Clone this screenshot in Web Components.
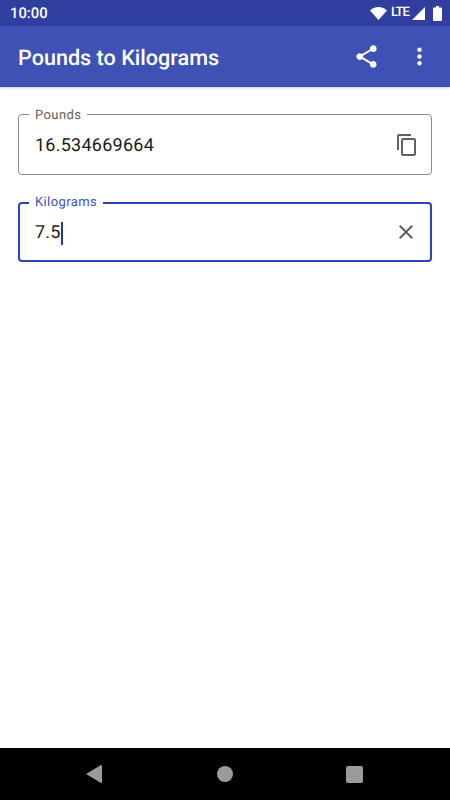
<!DOCTYPE html>
<html>
<head>
<meta charset="utf-8">
<style>
  html, body { margin: 0; height: 100%; background: #fff; }
  body { font-family: Roboto, sans-serif; text-rendering: geometricPrecision; }
  #screen { height: 800px; display: flex; flex-direction: column; overflow: hidden; }
</style>
</head>
<body>
<div id="screen">
  <status-bar></status-bar>
  <app-bar title="Pounds to Kilograms"></app-bar>
  <converter-form>
    <outlined-field label="Pounds" value="16.534669664" icon="copy"></outlined-field>
    <outlined-field label="Kilograms" value="7.5" icon="clear" focused></outlined-field>
  </converter-form>
  <nav-bar></nav-bar>
</div>

<script>
class StatusBar extends HTMLElement {
  connectedCallback() {
    this.attachShadow({ mode: 'open' });
    this.shadowRoot.innerHTML = `
      <style>
        :host {
          display: flex;
          align-items: center;
          justify-content: space-between;
          height: 26px;
          flex: none;
          background: #303f9f;
          color: #fff;
          padding: 0 8px 0 10px;
          font: 500 14.8px/26px Roboto, sans-serif;
        }
        .icons { display: flex; align-items: center; }
        .lte { font-size: 13px; letter-spacing: -0.9px; margin: 0 3px 0 4px; }
        svg { display: block; fill: #fff; }
      </style>
      <span>10:00</span>
      <div class="icons">
        <svg width="17" height="13" viewBox="0 0 17 13"><path d="M0 3.6C2.2 1.4 5.2 0 8.5 0s6.300 1.400 8.500 3.600L8.500 13z"/></svg>
        <span class="lte">LTE</span>
        <svg width="13" height="13" viewBox="0 0 13 13"><path d="M13 0v13H0z"/></svg>
        <svg width="9" height="15" viewBox="0 0 9 15" style="margin-left:8px"><path d="M3 0h3v1.500h2a1 1 0 0 1 1 1V14a1 1 0 0 1-1 1H1a1 1 0 0 1-1-1V2.500a1 1 0 0 1 1-1h2z"/></svg>
      </div>
    `;
  }
}

class AppBar extends HTMLElement {
  connectedCallback() {
    this.attachShadow({ mode: 'open' });
    this.shadowRoot.innerHTML = `
      <style>
        :host {
          display: flex;
          align-items: center;
          height: 61px;
          flex: none;
          background: #3f51b5;
          color: #fff;
          padding-left: 18px;
          box-shadow: 0 1px 2px rgba(0, 0, 0, 0.2);
          position: relative;
        }
        .title { flex: 1; padding-top: 3px; font: 500 21.6px Roboto, sans-serif; }
        .action { width: 27px; height: 27px; display: block; fill: #fff; }
        .share { margin-right: 26px; }
        .more { margin-right: 17px; }
      </style>
      <span class="title"></span>
      <svg class="action share" viewBox="0 0 24 24"><path d="M18 16.080c-.76 0-1.440.3-1.960.77L8.910 12.700c.05-.23.09-.46.09-.7s-.04-.47-.09-.7l7.050-4.110c.54.5 1.250.81 2.040.81 1.660 0 3-1.340 3-3s-1.340-3-3-3-3 1.340-3 3c0 .24.04.47.09.7L8.040 9.810C7.500 9.310 6.790 9 6 9c-1.660 0-3 1.340-3 3s1.340 3 3 3c.79 0 1.500-.31 2.040-.81l7.120 4.160c-.05.21-.08.43-.08.65 0 1.610 1.310 2.920 2.920 2.920s2.920-1.310 2.920-2.920-1.310-2.920-2.920-2.920z"/></svg>
      <svg class="action more" viewBox="0 0 24 24"><path d="M12 8c1.100 0 2-.9 2-2s-.9-2-2-2-2 .9-2 2 .9 2 2 2zm0 2c-1.100 0-2 .9-2 2s.9 2 2 2 2-.9 2-2-.9-2-2-2zm0 6c-1.100 0-2 .9-2 2s.9 2 2 2 2-.9 2-2-.9-2-2-2z"/></svg>
    `;
    this.shadowRoot.querySelector('.title').textContent = this.getAttribute('title');
  }
}

class ConverterForm extends HTMLElement {
  connectedCallback() {
    this.attachShadow({ mode: 'open' });
    this.shadowRoot.innerHTML = `
      <style>
        :host {
          display: flex;
          flex-direction: column;
          flex: 1;
          gap: 27px;
          padding: 27px 18px 0;
          background: #fff;
        }
      </style>
      <slot></slot>
    `;
  }
}

const FIELD_ICONS = {
  copy: '<path d="M16 1H4c-1.100 0-2 .9-2 2v14h2V3h12V1zm3 4H8c-1.100 0-2 .9-2 2v14c0 1.100.9 2 2 2h11c1.100 0 2-.9 2-2V7c0-1.100-.9-2-2-2zm0 16H8V7h11v14z"/>',
  clear: '<path d="M19 6.410L17.590 5 12 10.590 6.410 5 5 6.410 10.590 12 5 17.590 6.410 19 12 13.410 17.590 19 19 17.590 13.410 12z"/>'
};

class OutlinedField extends HTMLElement {
  connectedCallback() {
    this.attachShadow({ mode: 'open' });
    this.shadowRoot.innerHTML = `
      <style>
        :host {
          display: flex;
          align-items: center;
          height: 61px;
          box-sizing: border-box;
          position: relative;
          border: 1px solid #8c8c8c;
          border-radius: 4px;
          padding: 0 12px 0 16px;
          color: #1a1a1a;
        }
        :host([focused]) {
          height: 60px;
          border: 2px solid #2a47b6;
          padding: 0 12px 0 15px;
        }
        .label {
          position: absolute;
          left: 10px;
          top: -7px;
          padding: 0 6px;
          background: #fff;
          font: 400 13px/16px Roboto, sans-serif;
          letter-spacing: 0.4px;
          color: #616161;
        }
        :host([focused]) .label { left: 9px; top: -9px; color: #3f51b5; }
        .value {
          flex: 1;
          padding-top: 2px;
          font: 400 18px/24px Roboto, sans-serif;
          letter-spacing: 0.25px;
          display: flex;
          align-items: center;
        }
        .caret { display: none; width: 2px; height: 23px; background: #1f3aa8; }
        :host([focused]) .caret { display: block; }
        svg { width: 24px; height: 24px; fill: #616161; display: block; }
      </style>
      <span class="label"></span>
      <div class="value"><span class="text"></span><span class="caret"></span></div>
      <svg viewBox="0 0 24 24">${FIELD_ICONS[this.getAttribute('icon')]}</svg>
    `;
    this.shadowRoot.querySelector('.label').textContent = this.getAttribute('label');
    this.shadowRoot.querySelector('.text').textContent = this.getAttribute('value');
  }
}

class NavBar extends HTMLElement {
  connectedCallback() {
    this.attachShadow({ mode: 'open' });
    this.shadowRoot.innerHTML = `
      <style>
        :host {
          display: flex;
          align-items: center;
          height: 52px;
          flex: none;
          box-sizing: border-box;
          padding-left: 86px;
          background: #000;
        }
        svg { display: block; fill: #9b9b9b; }
        .back { margin-right: 115px; }
        .home { margin-right: 113px; }
      </style>
      <svg class="back" width="16" height="18" viewBox="0 0 16 18"><path d="M15 0a1 1 0 0 1 1 1v16a1 1 0 0 1-1 1L0 9z"/></svg>
      <svg class="home" width="16" height="16" viewBox="0 0 16 16"><circle cx="8" cy="8" r="8"/></svg>
      <svg width="17" height="17" viewBox="0 0 17 17"><rect width="17" height="17" rx="2"/></svg>
    `;
  }
}

customElements.define('status-bar', StatusBar);
customElements.define('app-bar', AppBar);
customElements.define('converter-form', ConverterForm);
customElements.define('outlined-field', OutlinedField);
customElements.define('nav-bar', NavBar);
</script>
</body>
</html>
